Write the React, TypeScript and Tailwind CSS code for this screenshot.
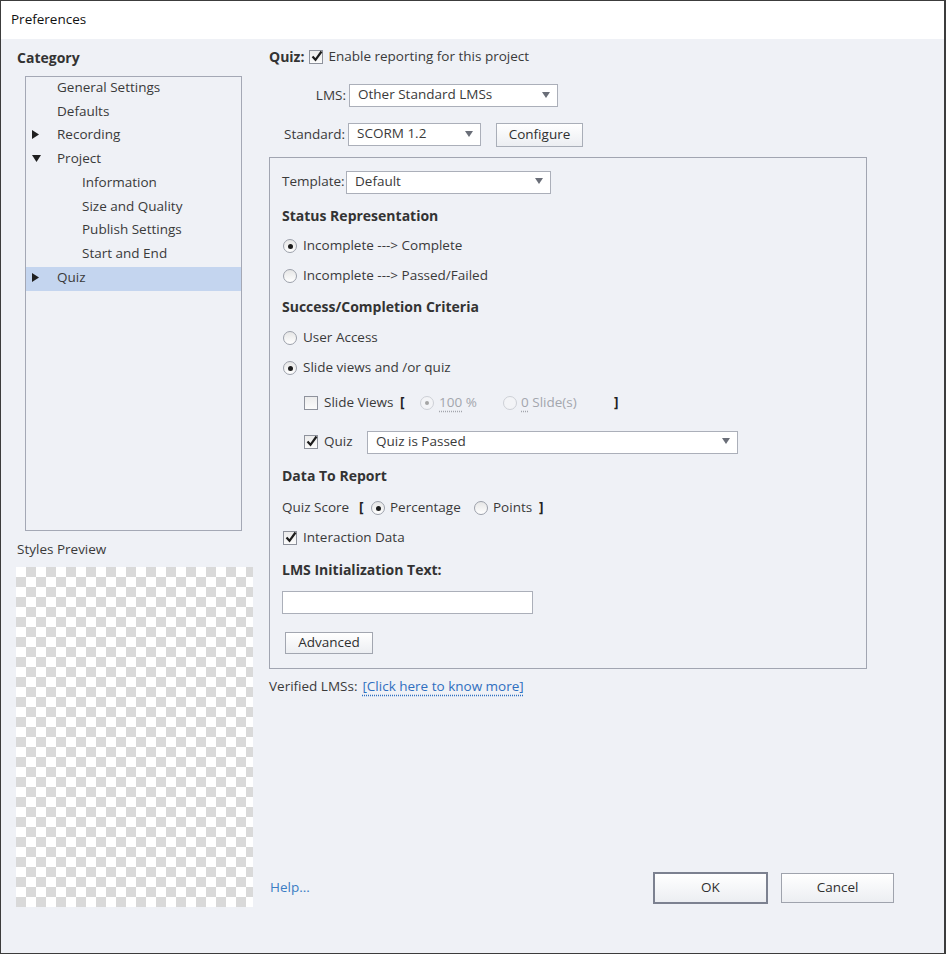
import React from 'react';

type TreeItem = { label: string; level: 1 | 2; arrow?: 'right' | 'down'; selected?: boolean };

const tree: TreeItem[] = [
  { label: 'General Settings', level: 1 },
  { label: 'Defaults', level: 1 },
  { label: 'Recording', level: 1, arrow: 'right' },
  { label: 'Project', level: 1, arrow: 'down' },
  { label: 'Information', level: 2 },
  { label: 'Size and Quality', level: 2 },
  { label: 'Publish Settings', level: 2 },
  { label: 'Start and End', level: 2 },
  { label: 'Quiz', level: 1, arrow: 'right', selected: true },
];

const Arrow = ({ dir }: { dir: 'right' | 'down' }) =>
  dir === 'right' ? (
    <svg width="7" height="9" viewBox="0 0 7 9">
      <polygon points="0,0 7,4.5 0,9" fill="#1f1f1f" />
    </svg>
  ) : (
    <svg width="9" height="7" viewBox="0 0 9 7">
      <polygon points="0,0 9,0 4.5,7" fill="#1f1f1f" />
    </svg>
  );

const Check = ({ checked }: { checked?: boolean }) => (
  <span className="relative inline-flex h-[14px] w-[14px] shrink-0 items-center justify-center border border-[#8e929c] bg-linear-to-b from-[#ececec] to-[#fbfbfb]">
    {checked && (
      <svg width="12" height="12" viewBox="0 0 12 12" className="absolute left-px top-[-1px]">
        <path d="M1.5 6.5 L4.5 9.8 L10.5 1.5" fill="none" stroke="#1c1c1c" strokeWidth="2.2" />
      </svg>
    )}
  </span>
);

const Radio = ({ on, disabled }: { on?: boolean; disabled?: boolean }) => (
  <span
    className={
      disabled
        ? 'inline-flex h-[14px] w-[14px] shrink-0 items-center justify-center rounded-full border border-[#cdd0d6] bg-[#f3f4f7]'
        : 'inline-flex h-[14px] w-[14px] shrink-0 items-center justify-center rounded-full border border-[#9ca0aa] bg-linear-to-b from-[#e6e6e6] to-white'
    }
  >
    {on && <span className={disabled ? 'h-[4px] w-[4px] rounded-full bg-[#a5a5a5]' : 'h-[5px] w-[5px] rounded-full bg-[#1c1c1c]'} />}
  </span>
);

const Select = ({ value, width }: { value: string; width: string }) => (
  <div className={`${width} flex h-[23px] shrink-0 items-center justify-between border border-[#abafb9] bg-white pl-[8px] pr-[7px] pb-[2px]`}>
    <span>{value}</span>
    <svg width="8" height="6" viewBox="0 0 8 6">
      <polygon points="0,0 8,0 4,6" fill="#6a6e78" />
    </svg>
  </div>
);

const Button = ({ label, className }: { label: string; className: string }) => (
  <button className={`flex items-center justify-center bg-linear-to-b from-white to-[#eceef2] pb-px text-[#2f2f2f] ${className}`}>{label}</button>
);

const Heading = ({ children, className = '' }: { children: React.ReactNode; className?: string }) => (
  <div className={`flex h-[20px] items-center pb-px text-[14px] font-bold text-[#333] ${className}`}>{children}</div>
);

export default function App() {
  return (
    <div className="flex h-[954px] w-[946px] flex-col border border-r-2 border-[#3c3c3c] bg-[#eff1f6] font-['Open_Sans',sans-serif] text-[13.5px] text-[#3a3a3a]">
      <div className="flex h-[38px] shrink-0 items-center bg-white pb-[2px] pl-[10px] text-[13.5px] text-[#111]">Preferences</div>

      <div className="flex gap-4 pl-[15px]">
        {/* left: category tree + preview */}
        <div className="flex w-[237px] shrink-0 flex-col">
          <Heading className="mt-[9px] pl-px">Category</Heading>
          <div className="ml-[9px] mt-[8px] h-[455px] w-[217px] border border-[#a4a8b5]">
            {tree.map(item => (
              <div
                key={item.label}
                className={
                  item.selected
                    ? 'flex h-[23.75px] items-center bg-[#c4d5ef] pb-[4px]'
                    : 'flex h-[23.75px] items-center pb-[4px]'
                }
              >
                {item.level === 1 ? (
                  <>
                    <span className="flex w-[31px] shrink-0 items-center pl-[6px] pt-px">{item.arrow && <Arrow dir={item.arrow} />}</span>
                    <span>{item.label}</span>
                  </>
                ) : (
                  <span className="pl-[56px]">{item.label}</span>
                )}
              </div>
            ))}
          </div>
          <div className="mt-[9px] flex h-[20px] items-center pb-px pl-px">Styles Preview</div>
          <div className="mt-[7px] h-[340px] w-[237px] bg-[image:conic-gradient(#d9d9d9_25%,#fff_0_50%,#d9d9d9_0_75%,#fff_0)] bg-size-[20px_20px]" />
        </div>

        {/* right: quiz reporting settings */}
        <div className="flex w-[598px] shrink-0 flex-col">
          <div className="mt-[6px] flex h-[24px] items-center pb-px">
            <span className="text-[14px] font-bold text-[#333]">Quiz:</span>
            <span className="ml-[5px] flex"><Check checked /></span>
            <span className="ml-[5px]">Enable reporting for this project</span>
          </div>

          <div className="mt-[15px] flex h-[23px] items-center">
            <span className="w-[80px] shrink-0 pb-px pr-[3px] text-right">LMS:</span>
            <Select value="Other Standard LMSs" width="w-[209px]" />
          </div>

          <div className="mt-[16px] flex h-[23px] items-center">
            <span className="w-[79px] shrink-0 pb-px pl-[15px]">Standard:</span>
            <Select value="SCORM 1.2" width="w-[133px]" />
            <Button label="Configure" className="ml-[15px] h-[24px] w-[87px] border border-[#a9aeb8]" />
          </div>

          <div className="mt-[11px] flex h-[512px] flex-col border border-[#a1a5b1] pl-[12px]">
            <div className="mt-[12px] flex h-[24px] items-center">
              <span className="w-[64px] shrink-0 pb-px">Template:</span>
              <Select value="Default" width="w-[205px]" />
            </div>

            <Heading className="mt-[12px]">Status Representation</Heading>
            <div className="mt-[10px] flex h-[20px] items-center gap-[6px] pl-px">
              <Radio on />
              <span className="pb-px">Incomplete ---&gt; Complete</span>
            </div>
            <div className="mt-[10px] flex h-[20px] items-center gap-[6px] pl-px">
              <Radio />
              <span className="pb-px">Incomplete ---&gt; Passed/Failed</span>
            </div>

            <Heading className="mt-[11px]">Success/Completion Criteria</Heading>
            <div className="mt-[11px] flex h-[20px] items-center gap-[6px] pl-px">
              <Radio />
              <span className="pb-px">User Access</span>
            </div>
            <div className="mt-[10px] flex h-[20px] items-center gap-[6px] pl-px">
              <Radio on />
              <span className="pb-px">Slide views and /or quiz</span>
            </div>

            <div className="mt-[15px] flex h-[20px] items-center pl-[22px]">
              <Check />
              <span className="ml-[6px] w-[76px] shrink-0 pb-px">Slide Views</span>
              <span className="w-[20px] shrink-0 pb-px font-bold text-[#222]">[</span>
              <span className="flex w-[83px] shrink-0 items-center gap-[5px] text-[#a3a6ad]">
                <Radio on disabled />
                <span className="pb-px">
                  <span className="underline decoration-dotted underline-offset-[3px]">100</span> %
                </span>
              </span>
              <span className="flex w-[111px] shrink-0 items-center gap-[4px] text-[#a3a6ad]">
                <Radio disabled />
                <span className="pb-px">
                  <span className="underline decoration-dotted underline-offset-[3px]">0</span> Slide(s)
                </span>
              </span>
              <span className="pb-px font-bold text-[#222]">]</span>
            </div>

            <div className="mt-[17px] flex h-[24px] items-center pl-[22px]">
              <Check checked />
              <span className="ml-[6px] w-[43px] shrink-0 pb-px">Quiz</span>
              <Select value="Quiz is Passed" width="w-[371px]" />
            </div>

            <Heading className="mt-[12px]">Data To Report</Heading>
            <div className="mt-[12px] flex h-[20px] items-center">
              <span className="w-[77px] shrink-0 pb-px">Quiz Score</span>
              <span className="w-[12px] shrink-0 pb-px font-bold text-[#222]">[</span>
              <span className="flex w-[19px] shrink-0 items-center"><Radio on /></span>
              <span className="w-[84px] shrink-0 pb-px">Percentage</span>
              <span className="flex w-[19px] shrink-0 items-center"><Radio /></span>
              <span className="w-[46px] shrink-0 pb-px">Points</span>
              <span className="pb-px font-bold text-[#222]">]</span>
            </div>
            <div className="mt-[10px] flex h-[20px] items-center gap-[6px] pl-px">
              <Check checked />
              <span className="pb-px">Interaction Data</span>
            </div>

            <Heading className="mt-[12px]">LMS Initialization Text:</Heading>
            <div className="mt-[11px] h-[23px] w-[251px] border border-[#abafb9] bg-white" />
            <Button label="Advanced" className="ml-[3px] mt-[18px] h-[22px] w-[88px] border border-[#a2a6b0]" />
          </div>

          <div className="mt-[8px] flex h-[20px] items-center pb-px">
            <span>Verified LMSs:</span>
            <span className="ml-[5px] text-[#2f6fc0] underline decoration-dotted underline-offset-[3px]">[Click here to know more]</span>
          </div>

          <div className="mt-[175px] flex h-[32px] items-center">
            <span className="w-[384px] shrink-0 pb-px pl-px text-[#3b7dc4]">Help...</span>
            <Button label="OK" className="h-[32px] w-[115px] shrink-0 border-2 border-[#7c8190]" />
            <Button label="Cancel" className="ml-[13px] h-[30px] w-[113px] shrink-0 border border-[#9fa3ad]" />
          </div>
        </div>
      </div>
    </div>
  );
}
